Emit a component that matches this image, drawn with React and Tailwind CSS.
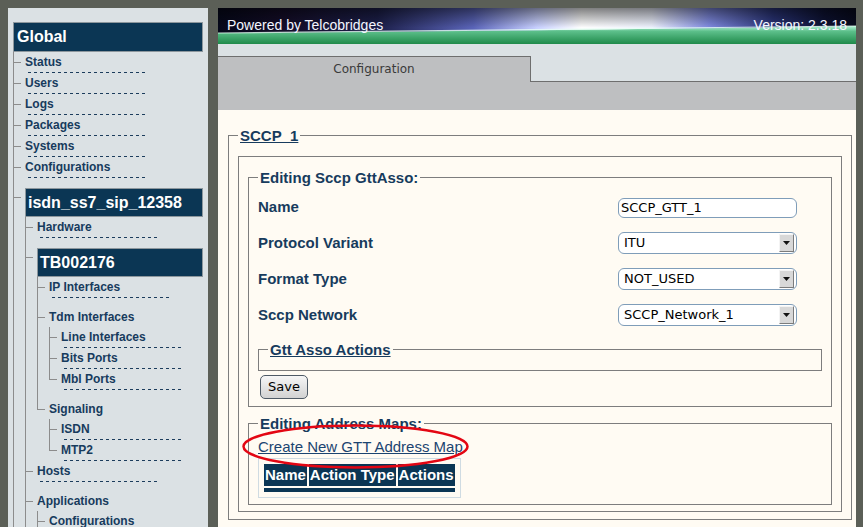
const navy = 'text-[#173b5d]';

const tree = [
  { label: 'Status' },
  { label: 'Users' },
  { label: 'Logs' },
  { label: 'Packages' },
  { label: 'Systems' },
  { label: 'Configurations' },
  {
    header: 'isdn_ss7_sip_12358',
    children: [
      { label: 'Hardware' },
      {
        header: 'TB002176',
        children: [
          { label: 'IP Interfaces' },
          {
            folder: 'Tdm Interfaces',
            children: [{ label: 'Line Interfaces' }, { label: 'Bits Ports' }, { label: 'Mbl Ports', last: true }]
          },
          {
            folder: 'Signaling',
            last: true,
            children: [{ label: 'ISDN' }, { label: 'MTP2', last: true }]
          }
        ]
      },
      { label: 'Hosts' },
      { folder: 'Applications', children: [{ label: 'Configurations' }] }
    ]
  }
];

function Connector({ top, last }) {
  return (
    <div className="flex w-[12px] shrink-0 flex-col">
      <div className={`border-l border-[#8c8c8c] ${top}`} />
      <div className="flex h-px border-l border-[#8c8c8c]">
        <div className="h-px w-[7px] bg-[#8c8c8c]" />
      </div>
      {!last && <div className="flex-1 border-l border-[#8c8c8c]" />}
    </div>
  );
}

function TreeList({ items }) {
  return (
    <ul className="flex flex-col">
      {items.map((item, i) => {
        if (item.header) {
          return (
            <li className="flex pt-[10px]" key={i}>
              <div className="-mt-[10px] flex">
                <Connector top="h-[19px]" last={item.last} />
              </div>
              <div className="flex min-w-0 flex-1 flex-col">
                <div className="flex h-[29px] items-center border border-[#8d979d] bg-[#0b3654] pl-[2px] text-[16px] font-bold text-white">
                  {item.header}
                </div>
                <TreeList items={item.children} />
              </div>
            </li>
          );
        }
        if (item.folder) {
          return (
            <li className="flex" key={i}>
              <Connector top="h-[19px]" last={item.last} />
              <div className="flex flex-1 flex-col pt-[9px]">
                <div className={`pt-[3px] pb-[3px] text-[12px] font-bold leading-[14px] ${navy}`}>{item.folder}</div>
                <TreeList items={item.children} />
              </div>
            </li>
          );
        }
        return (
          <li className="flex" key={i}>
            <Connector top="h-[10px]" last={item.last} />
            <div className="flex flex-col pt-[3px]">
              <span className={`text-[12px] font-bold leading-[14px] ${navy}`}>{item.label}</span>
              <div className="mt-[3px] ml-[3px] h-px w-[117px] bg-[linear-gradient(to_right,#1b3c5c_50%,transparent_50%)] bg-[length:6px_1px]" />
            </div>
          </li>
        );
      })}
    </ul>
  );
}

function Banner() {
  return (
    <div className="relative h-[36px] shrink-0 overflow-hidden">
      <svg className="absolute inset-0 h-full w-full" viewBox="0 0 638 36" preserveAspectRatio="none">
        <defs>
          <linearGradient id="sky" x1="0" x2="1" y1="0" y2="0">
            <stop offset="0" stopColor="#05081a" />
            <stop offset="0.1" stopColor="#140d28" />
            <stop offset="0.25" stopColor="#1c1f4a" />
            <stop offset="0.4" stopColor="#5a64b8" />
            <stop offset="0.5" stopColor="#c8d0ff" />
            <stop offset="0.57" stopColor="#ffffff" />
            <stop offset="0.68" stopColor="#eef2ff" />
            <stop offset="0.77" stopColor="#7f8ae0" />
            <stop offset="0.87" stopColor="#2a3478" />
            <stop offset="0.95" stopColor="#0d1233" />
            <stop offset="1" stopColor="#070a1c" />
          </linearGradient>
          <linearGradient id="shade" x1="0" x2="0" y1="0" y2="1">
            <stop offset="0" stopColor="#000" stopOpacity="0.5" />
            <stop offset="0.55" stopColor="#000" stopOpacity="0" />
          </linearGradient>
          <linearGradient id="grass" x1="0" x2="0" y1="0" y2="1">
            <stop offset="0" stopColor="#b4f2d6" />
            <stop offset="0.3" stopColor="#5cbf8a" />
            <stop offset="1" stopColor="#1f8a4a" />
          </linearGradient>
        </defs>
        <rect width="638" height="36" fill="url(#sky)" />
        <rect width="638" height="36" fill="url(#shade)" />
        <path d="M0 25 C 250 23, 450 21, 638 18 L638 36 L0 36 Z" fill="url(#grass)" />
        <path d="M0 25 C 250 23, 450 21, 638 18" stroke="#e6fff4" strokeWidth="1.2" fill="none" opacity="0.8" />
      </svg>
      <div className="relative flex h-full items-center justify-between px-[9px] pb-[1px] text-[14px] text-[#f4f6ff]">
        <span>Powered by Telcobridges</span>
        <span>Version: 2.3.18</span>
      </div>
    </div>
  );
}

function Arrow() {
  return (
    <div className="flex h-[18px] w-[15px] items-center justify-center border-t border-l border-t-[#f4f4f4] border-l-[#f4f4f4] border-b border-r border-b-[#7c7c7c] border-r-[#7c7c7c] bg-[#d8d8d8]">
      <svg width="7" height="4" viewBox="0 0 7 4">
        <polygon points="0,0 7,0 3.5,4" fill="#111" />
      </svg>
    </div>
  );
}

function Select({ value }) {
  return (
    <div className="flex h-[22px] w-[179px] items-center justify-between rounded-[6px] border border-[#7f9db9] bg-white pl-[5px] pr-[2px] font-['DejaVu_Sans',sans-serif] text-[13px] font-normal text-black">
      <span>{value}</span>
      <Arrow />
    </div>
  );
}

const legend = `px-[2px] text-[15px] font-bold leading-[17px] ${navy}`;

export default function App() {
  return (
    <div className="flex h-screen gap-[10px] overflow-hidden bg-[#5b5f57] pt-[8px] pr-[7px] pl-[8px] font-['Liberation_Sans',Arial,sans-serif]">
      <aside className="w-[200px] shrink-0 overflow-hidden bg-[#dbe1e4] px-[5px] pt-[14px]">
        <div className="flex h-[30px] items-center border border-[#8d979d] bg-[#0b3654] pl-[3px] text-[16px] font-bold text-white">
          Global
        </div>
        <TreeList items={tree} />
      </aside>

      <main className="flex min-w-0 flex-1 flex-col">
        <Banner />
        <div className="flex h-[38px] shrink-0 items-end bg-[#dbe1e4]">
          <div className="flex h-[26px] w-[313px] items-center justify-center border-t border-r border-[#6e6e6e] bg-[#bebfc1] pb-[1px] font-['DejaVu_Sans',sans-serif] text-[12px] text-[#3a3a3a]">
            Configuration
          </div>
          <div className="h-full flex-1 border-b border-[#6e6e6e]" />
        </div>
        <div className="h-[28px] shrink-0 bg-[#bebfc1]" />

        <div className="flex-1 bg-[#fffbf3] pt-[17px] pr-[4px] pl-[10px]">
          <fieldset className="border border-[#7d7d7d] px-[9px] pt-[12px] pb-[7px]">
            <legend className={`${legend} underline`}>SCCP_1</legend>
            <fieldset className="border border-[#7d7d7d] px-[9px] pt-[12px] pb-[6px]">
              <fieldset className="border border-[#7d7d7d] px-[9px] pt-[4px] pb-[7px]">
                <legend className={legend}>Editing Sccp GttAsso:</legend>
                <div className={`grid grid-cols-[360px_179px] grid-rows-[35px_36px_36px_36px] items-center text-[15px] font-bold ${navy}`}>
                  <span>Name</span>
                  <input
                    className="h-[20px] w-[179px] rounded-[6px] border border-[#7f9db9] bg-white px-[2px] font-['DejaVu_Sans',sans-serif] text-[13px] font-normal text-black outline-none"
                    defaultValue="SCCP_GTT_1"
                  />
                  <span>Protocol Variant</span>
                  <Select value="ITU" />
                  <span>Format Type</span>
                  <Select value="NOT_USED" />
                  <span>Sccp Network</span>
                  <Select value="SCCP_Network_1" />
                </div>
                <fieldset className="mt-[8px] border border-[#7d7d7d] px-[9px] pt-[6px] pb-[6px]">
                  <legend className={`${legend} underline`}>Gtt Asso Actions</legend>
                </fieldset>
                <button
                  className="mt-[4px] ml-[2px] block h-[24px] w-[48px] rounded-[5px] border border-[#4e5a66] bg-[linear-gradient(#f6f6f6,#d2d2d2)] font-['DejaVu_Sans',sans-serif] text-[13px] text-black"
                  type="button"
                >
                  Save
                </button>
              </fieldset>

              <fieldset className="mt-[8px] border border-[#7d7d7d] px-[9px] pt-[6px] pb-[6px]">
                <legend className={legend}>Editing Address Maps:</legend>
                <div className="relative h-[17px] text-[15px] leading-[17px]">
                  <a className="text-[#1b4470] underline" href="#">
                    Create New GTT Address Map
                  </a>
                  <svg
                    className="pointer-events-none absolute top-[-15px] left-[-17px]"
                    width="229"
                    height="47"
                    viewBox="0 0 229 47"
                  >
                    <ellipse cx="114.5" cy="23.5" rx="112" ry="21" fill="none" stroke="#e30613" strokeWidth="2.5" />
                  </svg>
                </div>
                <div className="mt-[3px] flex w-fit flex-col gap-[2px] border border-[#cfdbe2] p-[5px]">
                  <div className="flex gap-[2px] text-[15px] font-bold leading-[22px] text-white">
                    <span className="bg-[#0b3654] px-[1px]">Name</span>
                    <span className="bg-[#0b3654] px-[1px]">Action Type</span>
                    <span className="bg-[#0b3654] px-[1px]">Actions</span>
                  </div>
                  <div className="h-[4px] bg-[#0b3654]" />
                </div>
              </fieldset>
            </fieldset>
          </fieldset>
        </div>
      </main>
    </div>
  );
}
